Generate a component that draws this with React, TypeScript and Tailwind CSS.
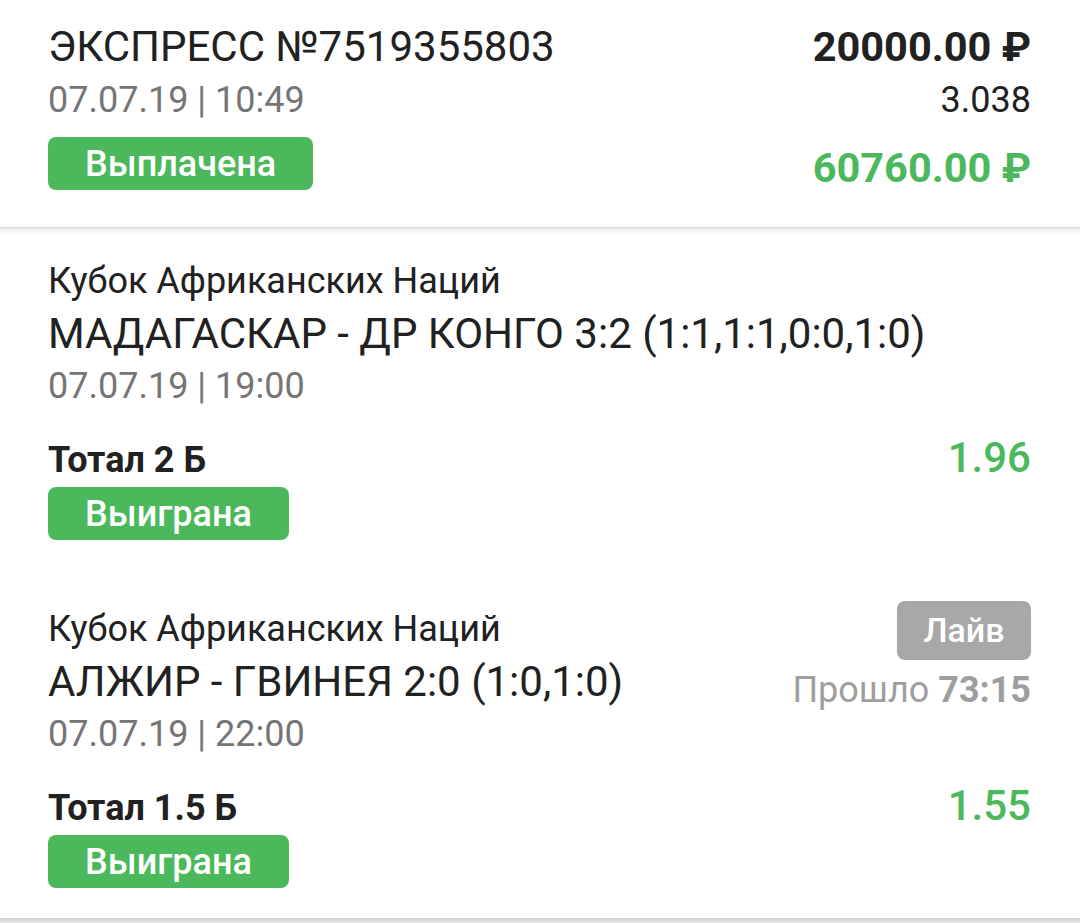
import React from 'react';

type Bet = {
  league: string;
  match: string;
  date: string;
  market: string;
  odds: string;
  status: string;
  live?: string;
};

const bets: Bet[] = [
  {
    league: 'Кубок Африканских Наций',
    match: 'МАДАГАСКАР - ДР КОНГО 3:2 (1:1,1:1,0:0,1:0)',
    date: '07.07.19 | 19:00',
    market: 'Тотал 2 Б',
    odds: '1.96',
    status: 'Выиграна',
  },
  {
    league: 'Кубок Африканских Наций',
    match: 'АЛЖИР - ГВИНЕЯ 2:0 (1:0,1:0)',
    date: '07.07.19 | 22:00',
    market: 'Тотал 1.5 Б',
    odds: '1.55',
    status: 'Выиграна',
    live: '73:15',
  },
];

const Badge: React.FC<{ children: React.ReactNode }> = ({ children }) => (
  <div className="inline-flex h-[53px] items-center rounded-[8px] bg-[#4cb85c] px-[37px] text-[36px] font-medium text-white">
    {children}
  </div>
);

const BetRow: React.FC<{ bet: Bet }> = ({ bet }) => (
  <div className="flex flex-col">
    <div className="flex items-start justify-between">
      <div className="flex flex-col">
        <div className="text-[36px] leading-[38px] text-[#212121]">{bet.league}</div>
        <div className="mt-[6px] text-[42px] leading-[56px] text-[#212121]">{bet.match}</div>
        <div className="text-[36px] leading-[48px] text-[#757575]">{bet.date}</div>
      </div>
      {bet.live && (
        <div className="-mt-[9px] flex flex-col items-end">
          <div className="flex h-[59px] w-[134px] items-center justify-center rounded-[8px] bg-[#a8a8a8] text-[34px] font-medium text-white">
            Лайв
          </div>
          <div className="mt-[10px] text-[36px] leading-[40px] text-[#9e9e9e]">
            Прошло <span className="font-bold">{bet.live}</span>
          </div>
        </div>
      )}
    </div>
    <div className="mt-[26px] flex items-baseline justify-between">
      <div className="text-[36px] font-bold leading-[44px] text-[#212121]">{bet.market}</div>
      <div className="text-[42px] font-medium leading-[44px] text-[#4cb85c]">{bet.odds}</div>
    </div>
    <div className="mt-[5px]">
      <Badge>{bet.status}</Badge>
    </div>
  </div>
);

const App: React.FC = () => {
  return (
    <div className="min-h-screen w-[1080px] bg-white font-['Roboto',sans-serif]">
      <div className="flex justify-between border-b border-[#d6d6d6] pt-[22px] pr-[49px] pb-[31px] pl-[48px]">
        <div className="flex flex-col">
          <div className="text-[42px] leading-[50px] text-[#212121]">ЭКСПРЕСС №7519355803</div>
          <div className="text-[36px] leading-[56px] text-[#757575]">07.07.19 | 10:49</div>
          <div className="mt-[9px]">
            <Badge>Выплачена</Badge>
          </div>
        </div>
        <div className="flex flex-col items-end">
          <div className="text-[41.5px] font-bold leading-[50px] text-[#212121]">20000.00 ₽</div>
          <div className="text-[36px] leading-[56px] text-[#212121]">3.038</div>
          <div className="mt-[12px] text-[41.5px] font-bold leading-[56px] text-[#4cb85c]">60760.00 ₽</div>
        </div>
      </div>
      <div className="h-[8px] bg-gradient-to-b from-[#ececec] to-white" />
      <div className="flex flex-col gap-[70px] pt-[26px] pr-[49px] pb-[30px] pl-[48px]">
        {bets.map((bet, i) => (
          <BetRow key={i} bet={bet} />
        ))}
      </div>
      <div className="h-[5px] border-t border-[#cfcfcf] bg-gradient-to-b from-[#d6d6d6] to-[#e8e8e8]" />
    </div>
  );
};

export default App;
